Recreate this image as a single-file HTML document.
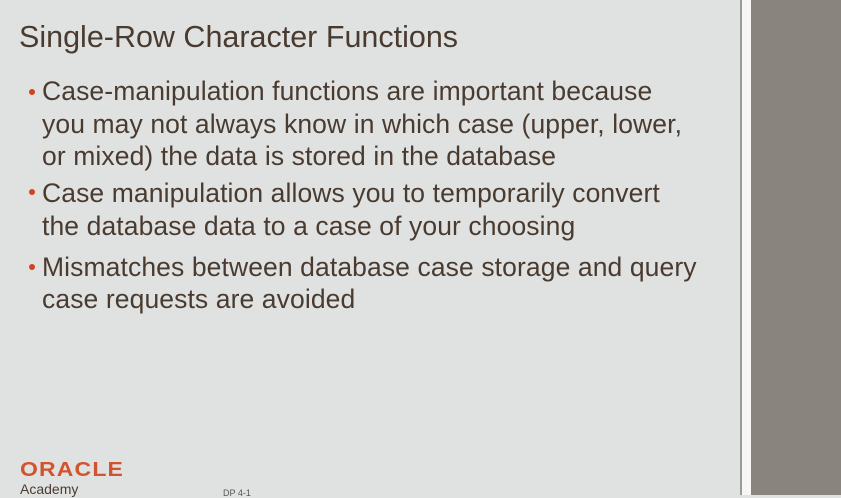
<!DOCTYPE html>
<html><head><style>
html,body{margin:0;padding:0}
body{width:841px;height:495px;background:#e0e2e1;position:relative;overflow:hidden;font-family:"Liberation Sans",sans-serif;color:#4a3b30}
.title{position:absolute;left:19px;top:20px;font-size:30.5px;white-space:nowrap}
.line{position:absolute;left:42px;font-size:26.5px;white-space:nowrap;letter-spacing:0.1px}
.dot{position:absolute;left:29px;width:6px;height:6px;border-radius:50%;background:#d2421f}
.div{position:absolute;left:740px;top:0;width:2px;height:495px;background:#9a9a9a}
.strip{position:absolute;left:742px;top:0;width:9px;height:495px;background:#f7f6f4}
.side{position:absolute;left:751px;top:0;width:90px;height:495px;background:#89857e}
.oracle{position:absolute;left:20px;top:459px;font-size:20px;font-weight:bold;color:#d2532f;letter-spacing:1px;transform:scaleX(1.15);transform-origin:left}
.acad{position:absolute;left:20px;top:481px;font-size:14px;color:#4a3b30}
.pg{position:absolute;left:223px;top:488px;font-size:9px;color:#555}
</style></head><body>
<div class="title">Single-Row Character Functions</div>
<div class="dot" style="top:89px"></div>
<div class="line" style="top:76px">Case-manipulation functions are important because</div>
<div class="line" style="top:109px">you may not always know in which case (upper, lower,</div>
<div class="line" style="top:141px">or mixed) the data is stored in the database</div>
<div class="dot" style="top:189px"></div>
<div class="line" style="top:178px">Case manipulation allows you to temporarily convert</div>
<div class="line" style="top:211px">the database data to a case of your choosing</div>
<div class="dot" style="top:264px"></div>
<div class="line" style="top:252px">Mismatches between database case storage and query</div>
<div class="line" style="top:284px">case requests are avoided</div>
<div class="oracle">ORACLE</div>
<div class="acad">Academy</div>
<div class="pg">DP 4-1</div>
<div class="div"></div><div class="strip"></div><div class="side"></div>
</body></html>
